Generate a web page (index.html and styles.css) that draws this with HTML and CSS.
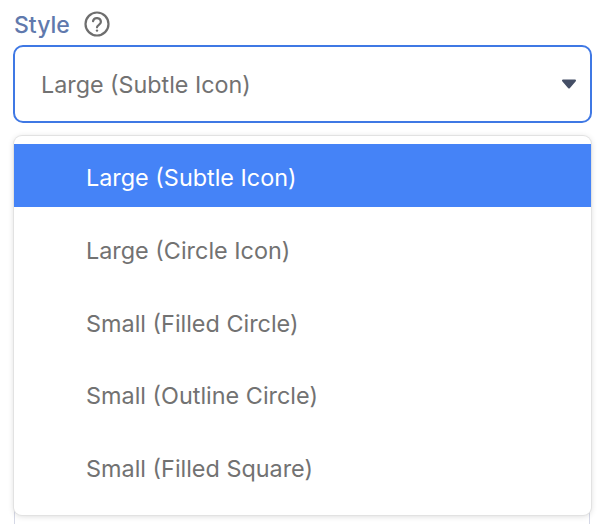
FILE: index.html
```html
<!DOCTYPE html>
<html lang="en">

<head>
    <meta charset="utf-8" />
    <title>Style select</title>
    <link rel="stylesheet" href="styles.css">
</head>

<body>
    <div class="field">
        <div class="label-row">
            <span class="label">Style</span>
            <svg class="help" width="26" height="26" viewBox="0 0 26 26" fill="none" stroke="#6e6e6e">
                <circle cx="13" cy="13" r="11.5" stroke-width="2.2" />
                <path d="M9 10.2a4 4 0 0 1 7.9 .9c0 2.6-3.9 2.8-3.9 5.2" stroke-width="2.2" stroke-linecap="round" />
                <circle cx="13" cy="19.6" r="1.2" fill="#6e6e6e" stroke="none" />
            </svg>
        </div>
        <div class="select">
            <span>Large (Subtle Icon)</span>
            <svg class="caret" width="16" height="10" viewBox="0 0 16 10">
                <path d="M2 1.5h12l-6 7z" fill="#454f66" stroke="#454f66" stroke-width="2" stroke-linejoin="round" />
            </svg>
        </div>
        <div class="menu-wrap">
            <div class="next-field"></div>
            <ul class="menu">
                <li class="active">Large (Subtle Icon)</li>
                <li>Large (Circle Icon)</li>
                <li>Small (Filled Circle)</li>
                <li>Small (Outline Circle)</li>
                <li>Small (Filled Square)</li>
            </ul>
        </div>
    </div>
</body>

</html>
```

FILE: styles.css
```css
body {
    margin: 0;
    background-color: #fff;
    font-family: Inter, "Liberation Sans", sans-serif;
    overflow: hidden;
}

.field {
    padding: 11px 10px 0 13px;
}

.label-row {
    display: flex;
    align-items: center;
    gap: 14px;
    height: 28px;
}

.label {
    margin-left: 1px;
    font-size: 23px;
    font-weight: 500;
    color: #6079ad;
}

.help {
    align-self: flex-start;
}

.select {
    display: flex;
    justify-content: space-between;
    align-items: center;
    height: 78px;
    margin-top: 6px;
    padding: 0 13px 0 26px;
    box-sizing: border-box;
    border: 2.5px solid #3f78e4;
    border-radius: 10px;
    font-size: 23.3px;
    color: #727272;
}

.menu-wrap {
    position: relative;
    margin: 13px 1px 0;
}

.next-field {
    height: 400px;
    margin-right: 1px;
    border: 1px solid #d5d8e6;
    border-radius: 8px;
    box-sizing: border-box;
}

.menu {
    position: absolute;
    top: 0;
    left: 0;
    right: 0;
    height: 379px;
    box-sizing: border-box;
    margin: 0;
    padding: 8px 0 0;
    list-style: none;
    background-color: #fff;
    border-radius: 8px;
    box-shadow: 0 0 0 1px #e2e2e2, 0 1px 6px rgba(0, 0, 0, 0.16);
    font-size: 23.4px;
    color: #727272;
}

.menu li {
    display: flex;
    align-items: center;
    box-sizing: border-box;
    height: 63px;
    margin-bottom: 9.8px;
    padding: 4px 0 0 72px;
}

.menu .active {
    background-color: #4583f7;
    color: #fff;
}
```
